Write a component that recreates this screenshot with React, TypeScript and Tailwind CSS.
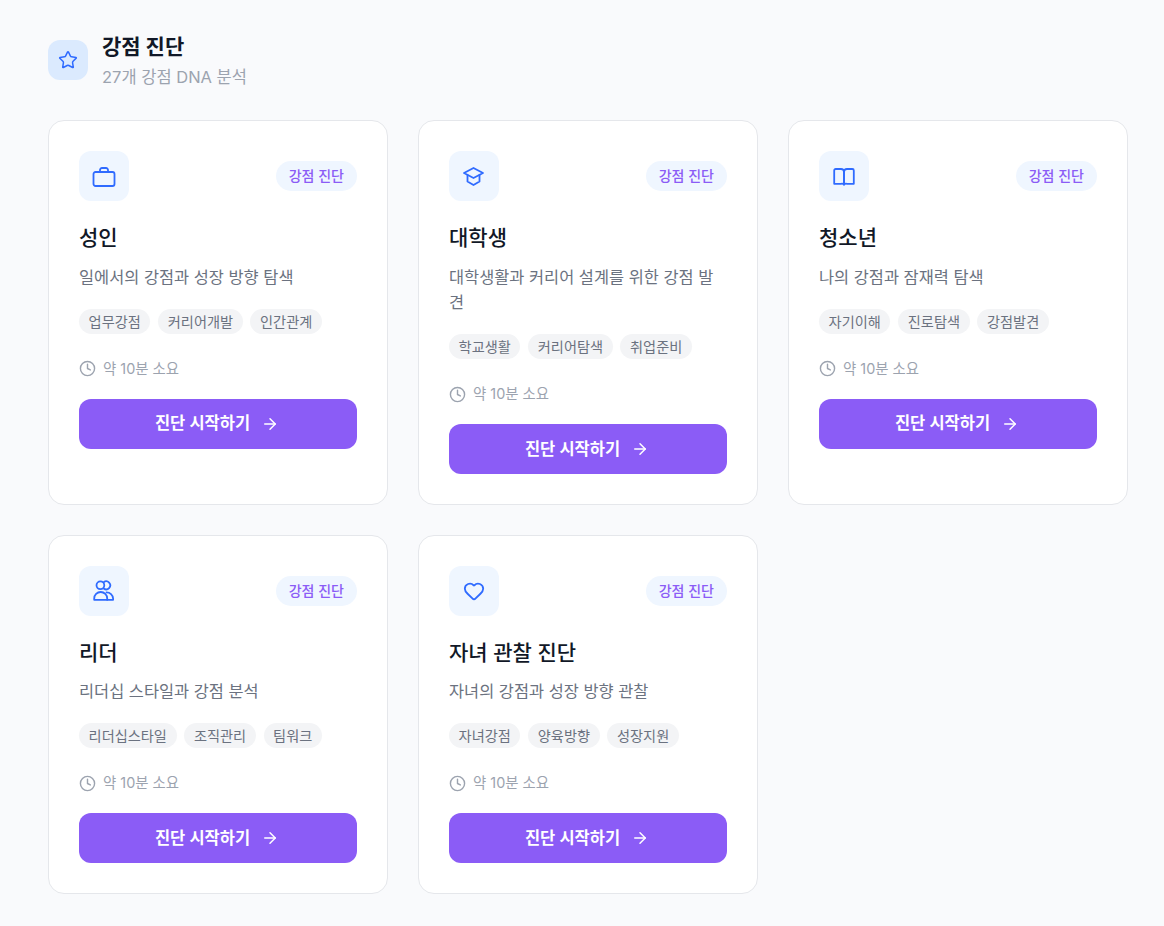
import { ArrowRight, Clock, Heart, Star } from "lucide-react"
import type { ReactNode } from "react"

const iconClass = "h-6 w-6 text-[#2f6bff]"

function BriefcaseIcon() {
  return (
    <svg viewBox="0 0 24 24" fill="none" stroke="currentColor" strokeWidth="1.8" strokeLinecap="round" strokeLinejoin="round" className={iconClass}>
      <rect x="1.5" y="8" width="21" height="14" rx="2" />
      <path d="M16 8V6a2 2 0 0 0-2-2h-4a2 2 0 0 0-2 2v2" />
    </svg>
  )
}

function CapIcon() {
  return (
    <svg viewBox="0 0 24 24" fill="none" stroke="currentColor" strokeWidth="1.8" strokeLinecap="round" strokeLinejoin="round" className={iconClass}>
      <path d="M11.5 4 2 9l9.5 5 9.5-5-9.5-5Z" />
      <path d="M5.5 11v6.5l6 3.5 6-3.5V11" />
    </svg>
  )
}

function BookIcon() {
  return (
    <svg viewBox="0 0 24 24" fill="none" stroke="currentColor" strokeWidth="1.8" strokeLinecap="round" strokeLinejoin="round" className={iconClass}>
      <path d="M2.2 6.5v13.3H9a3 3 0 0 1 3 .7V8a3 3 0 0 0-3-3H3.7a1.5 1.5 0 0 0-1.5 1.5Z" />
      <path d="M21.8 6.5v13.3H15a3 3 0 0 0-3 .7V8a3 3 0 0 1 3-3h5.3a1.5 1.5 0 0 1 1.5 1.5Z" />
    </svg>
  )
}

function PeopleIcon() {
  return (
    <svg viewBox="0 0 24 24" fill="none" stroke="currentColor" strokeWidth="1.8" strokeLinecap="round" strokeLinejoin="round" className={iconClass}>
      <circle cx="8.4" cy="6.3" r="3.9" />
      <path d="M11.7 3.2a4 4 0 1 1 0 6.3" />
      <path d="M2.2 20.8v-1.3a6.5 6.5 0 0 1 13 0v1.3H2.2Z" />
      <path d="M14.5 13.4a6.5 6.5 0 0 1 6.6 6.1v1.3h-5.9" />
    </svg>
  )
}

interface Diagnosis {
  title: string
  desc: string
  tags: string[]
  icon: ReactNode
}

const items: Diagnosis[] = [
  { title: "성인", desc: "일에서의 강점과 성장 방향 탐색", tags: ["업무강점", "커리어개발", "인간관계"], icon: <BriefcaseIcon /> },
  { title: "대학생", desc: "대학생활과 커리어 설계를 위한 강점 발견", tags: ["학교생활", "커리어탐색", "취업준비"], icon: <CapIcon /> },
  { title: "청소년", desc: "나의 강점과 잠재력 탐색", tags: ["자기이해", "진로탐색", "강점발견"], icon: <BookIcon /> },
  { title: "리더", desc: "리더십 스타일과 강점 분석", tags: ["리더십스타일", "조직관리", "팀워크"], icon: <PeopleIcon /> },
  { title: "자녀 관찰 진단", desc: "자녀의 강점과 성장 방향 관찰", tags: ["자녀강점", "양육방향", "성장지원"], icon: <Heart className="h-[22px] w-[22px] text-[#2f6bff]" strokeWidth={2} /> },
]

export default function App() {
  return (
    <div className="min-h-[926px] bg-[#f9fafc] pt-8 pr-9 pb-8 pl-12 font-['Inter','Noto_Sans_CJK_KR',sans-serif]">
      <div className="mb-7 flex items-start gap-[14px]">
        <div className="mt-2 flex h-10 w-10 items-center justify-center rounded-xl bg-[#dbeafe]">
          <Star className="h-5 w-5 text-[#2f6bff]" strokeWidth={1.8} />
        </div>
        <div>
          <h2 className="text-[21px] leading-[30px] font-bold text-[#111827]">강점 진단</h2>
          <p className="text-[16.5px] leading-[30px] text-[#9ca3af]">27개 강점 DNA 분석</p>
        </div>
      </div>

      <div className="grid grid-cols-3 gap-[30px]">
        {items.map((item) => (
          <div key={item.title} className="rounded-2xl border border-[#e5e7eb] bg-white px-[30px] pt-[30px] pb-[29.5px]">
            <div className="mb-[23px] flex items-center justify-between">
              <div className="flex h-[50px] w-[50px] items-center justify-center rounded-xl bg-[#eff6ff]">
                {item.icon}
              </div>
              <span className="rounded-full bg-[#eff6ff] px-[13px] py-[5px] text-sm leading-5 font-medium text-[#8b5cf6]">강점 진단</span>
            </div>
            <h3 className="mb-[12.5px] text-[21px] leading-7 font-medium text-[#111827]">{item.title}</h3>
            <p className="mb-[18.5px] text-[16.4px] leading-[25.5px] text-[#6b7280]">{item.desc}</p>
            <div className="mb-[25px] flex flex-wrap gap-x-[7.8px] gap-y-2">
              {item.tags.map((tag) => (
                <span key={tag} className="rounded-full bg-[#f3f4f6] px-[9.6px] py-[3px] text-[14.2px] leading-[19px] text-[#6b7280]">{tag}</span>
              ))}
            </div>
            <div className="mb-5 flex items-center gap-[7px] text-[14.4px] leading-5 text-[#9ca3af]">
              <Clock className="h-[17px] w-[17px]" strokeWidth={2} />
              <span>약 10분 소요</span>
            </div>
            <button className="flex h-[50px] w-full items-center justify-center gap-[11px] rounded-xl bg-[#8b5cf6] pr-[2px] text-[16.5px] font-semibold text-white">
              진단 시작하기
              <ArrowRight className="h-[18px] w-[18px]" strokeWidth={2} />
            </button>
          </div>
        ))}
      </div>
    </div>
  )
}
